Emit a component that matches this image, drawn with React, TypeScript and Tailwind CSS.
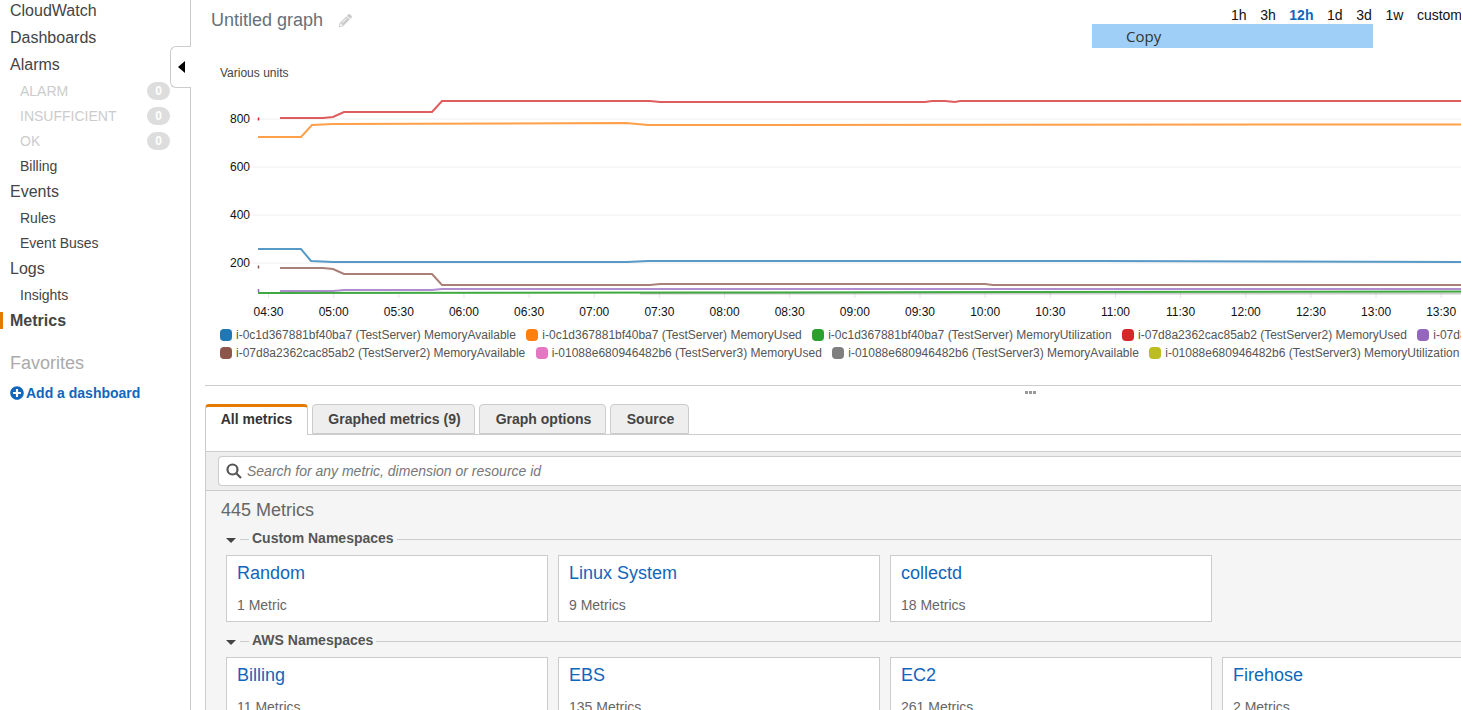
import { FaPencilAlt, FaPlusCircle } from "react-icons/fa";

const ticks = [
  "04:30", "05:00", "05:30", "06:00", "06:30", "07:00", "07:30", "08:00", "08:30", "09:00",
  "09:30", "10:00", "10:30", "11:00", "11:30", "12:00", "12:30", "13:00", "13:30",
];

const yLabels = [
  { label: "800", y: 119 },
  { label: "600", y: 167 },
  { label: "400", y: 215 },
  { label: "200", y: 263 },
];

const series = [
  { color: "#7f7f7f", opacity: 0.4, points: "640,293.5 1461,293.5" },
  { color: "#1f77b4", opacity: 0.75, points: "258,249 301,249 311,261 333,262 627,262 648,261 1100,261 1461,262" },
  { color: "#ff7f0e", opacity: 0.75, points: "258,137 301,137 312,125 333,124 626,123 648,125 1461,124.5" },
  { color: "#d62728", opacity: 0.75, points: "280,118 323,118 333,117 344,112 432,112 442,101 650,101 660,102 925,102 932,101 945,101 955,102 960,101 1461,101" },
  { color: "#8c564b", opacity: 0.75, points: "280,268 323,268 333,269 344,274 432,274 442,285 650,285 660,284 985,284 993,285 1461,285" },
  { color: "#9467bd", opacity: 0.75, points: "280,291 333,291 344,290 432,290 442,289 1461,289" },
  { color: "#2ca02c", opacity: 0.9, points: "258,293 700,292.5 1461,291.5" },
];

const legendRows = [
  [
    { color: "bg-[#1f77b4]", text: "i-0c1d367881bf40ba7 (TestServer) MemoryAvailable" },
    { color: "bg-[#ff7f0e]", text: "i-0c1d367881bf40ba7 (TestServer) MemoryUsed" },
    { color: "bg-[#2ca02c]", text: "i-0c1d367881bf40ba7 (TestServer) MemoryUtilization" },
    { color: "bg-[#d62728]", text: "i-07d8a2362cac85ab2 (TestServer2) MemoryUsed" },
    { color: "bg-[#9467bd]", text: "i-07d8a2362cac85ab2 (TestServer2) MemoryUtilization" },
  ],
  [
    { color: "bg-[#8c564b]", text: "i-07d8a2362cac85ab2 (TestServer2) MemoryAvailable" },
    { color: "bg-[#e377c2]", text: "i-01088e680946482b6 (TestServer3) MemoryUsed" },
    { color: "bg-[#7f7f7f]", text: "i-01088e680946482b6 (TestServer3) MemoryAvailable" },
    { color: "bg-[#bcbd22]", text: "i-01088e680946482b6 (TestServer3) MemoryUtilization" },
  ],
];

const customNamespaces = [
  { name: "Random", count: "1 Metric" },
  { name: "Linux System", count: "9 Metrics" },
  { name: "collectd", count: "18 Metrics" },
];

const awsNamespaces = [
  { name: "Billing", count: "11 Metrics" },
  { name: "EBS", count: "135 Metrics" },
  { name: "EC2", count: "261 Metrics" },
  { name: "Firehose", count: "2 Metrics" },
];

function NavTop({ children, active }: { children: string; active?: boolean }) {
  return (
    <div className={`h-[27px] flex items-center pl-2.5 text-base relative ${active ? "font-bold text-[#444]" : "text-[#444]"}`}>
      {active && <span className="absolute left-0 top-[5px] w-[3px] h-[17px] bg-[#e47b00]"></span>}
      {children}
    </div>
  );
}

function NavSub({ children }: { children: string }) {
  return <div className="h-[25px] flex items-center pl-5 text-sm text-[#444]">{children}</div>;
}

function NavAlarm({ children }: { children: string }) {
  return (
    <div className="h-[25px] flex items-center justify-between pl-5 pr-5 text-sm text-[#ccc]">
      <span>{children}</span>
      <span className="w-[23px] h-[18px] rounded-full bg-[#ddd] text-white text-xs font-bold flex items-center justify-center">
        0
      </span>
    </div>
  );
}

function Chart() {
  return (
    <svg width="1270" height="265" viewBox="191 55 1270 265" className="block" style={{ fontFamily: "'Liberation Sans', Arial, sans-serif" }}>
      <text x="220" y="77" fontSize="12" fill="#444">Various units</text>
      {yLabels.map((l) => (
        <g key={l.label}>
          <line x1="253" x2="1461" y1={l.y} y2={l.y} stroke="#eee" />
          <text x="250" y={l.y + 4} fontSize="12" textAnchor="end" fill="#111">{l.label}</text>
        </g>
      ))}
      {ticks.map((t, i) => (
        <g key={t}>
          <line x1={268.5 + i * 65.15} x2={268.5 + i * 65.15} y1="293" y2="298" stroke="#e5e5e5" />
          <text x={268.5 + i * 65.15} y="316" fontSize="12" textAnchor="middle" fill="#111">{t}</text>
        </g>
      ))}
      <line x1="258.5" x2="258.5" y1="117.5" y2="120.5" stroke="#d62728" strokeWidth="1.5" />
      <line x1="258.5" x2="258.5" y1="265.5" y2="268.5" stroke="#8c564b" strokeWidth="1.5" />
      <line x1="258.5" x2="258.5" y1="289" y2="292" stroke="#9467bd" strokeWidth="1.5" />
      {series.map((s) => (
        <polyline key={s.color} points={s.points} fill="none" stroke={s.color} strokeWidth="2" strokeOpacity={s.opacity} />
      ))}
    </svg>
  );
}

function SectionHeading({ children }: { children: string }) {
  return (
    <div className="flex items-center h-[18px] pl-[5px]">
      <span className="w-0 h-0 border-x-[5px] border-x-transparent border-t-[5px] border-t-[#444] mt-1"></span>
      <span className="w-[9px] h-px bg-[#ccc] ml-1 mt-0.5"></span>
      <span className="ml-[3px] text-sm font-bold text-[#555] whitespace-nowrap">{children}</span>
      <span className="flex-1 h-px bg-[#ccc] ml-[3px] mt-0.5"></span>
    </div>
  );
}

function NamespaceCard({ name, count }: { name: string; count: string }) {
  return (
    <div className="w-[322px] h-[67px] shrink-0 border border-[#ccc] bg-white px-2.5 pt-[5px]">
      <div className="text-lg leading-[24px] text-[#1166bb]">{name}</div>
      <div className="text-sm leading-4 text-[#666] mt-[12px]">{count}</div>
    </div>
  );
}

export default function App() {
  return (
    <div className="relative flex h-screen w-screen overflow-hidden bg-white font-['Liberation_Sans',Arial,sans-serif]">
      {/* Sidebar */}
      <aside className="w-[191px] shrink-0 border-r border-[#ccc] -mt-[3px]">
        <NavTop>CloudWatch</NavTop>
        <NavTop>Dashboards</NavTop>
        <NavTop>Alarms</NavTop>
        <NavAlarm>ALARM</NavAlarm>
        <NavAlarm>INSUFFICIENT</NavAlarm>
        <NavAlarm>OK</NavAlarm>
        <NavSub>Billing</NavSub>
        <NavTop>Events</NavTop>
        <NavSub>Rules</NavSub>
        <NavSub>Event Buses</NavSub>
        <NavTop>Logs</NavTop>
        <NavSub>Insights</NavSub>
        <NavTop active>Metrics</NavTop>
        <div className="pl-2.5 mt-[17px] text-lg leading-[24px] text-[#aaa]">Favorites</div>
        <div className="pl-2.5 mt-[8px] flex items-center gap-[2px] text-sm font-bold text-[#1166bb]">
          <FaPlusCircle className="text-[14px]" />
          Add a dashboard
        </div>
      </aside>

      {/* Collapse handle */}
      <div className="absolute left-[170px] top-[46px] w-[21px] h-[42px] bg-white border border-r-0 border-[#ccc] rounded-l-md flex items-center justify-center">
        <span className="w-0 h-0 border-y-[6px] border-y-transparent border-r-[7px] border-r-black"></span>
      </div>

      {/* Main */}
      <main className="flex-1 min-w-0 flex flex-col">
        <header className="h-[55px] shrink-0 flex justify-between">
          <div className="flex items-center h-10 pl-5">
            <h1 className="text-lg text-[#687078]">Untitled graph</h1>
            <FaPencilAlt className="ml-4 text-[13px] text-[#ccc]" />
          </div>
          <div className="flex flex-col items-end">
            <div className="flex h-6 pt-[6px] -mr-px items-center text-sm text-[#111] gap-[13.6px] whitespace-nowrap">
              <span>1h</span>
              <span>3h</span>
              <span className="font-bold text-[#1166bb]">12h</span>
              <span>1d</span>
              <span>3d</span>
              <span>1w</span>
              <span>custom</span>
            </div>
            <div className="mr-[88px] w-[281px] h-6 bg-[#9fcff7] pl-[34px] flex items-center text-[15px] text-[#333] font-['Open_Sans',sans-serif]">
              Copy
            </div>
          </div>
        </header>

        <Chart />

        <div className="h-[65px] shrink-0 pl-[29px] pt-[6px] overflow-hidden">
          {legendRows.map((row, i) => (
            <div key={i} className="flex h-[18px] items-center gap-[10.4px] whitespace-nowrap">
              {row.map((item) => (
                <div key={item.text} className="flex items-center gap-1 text-xs text-[#555]">
                  <span className={`w-3 h-3 rounded ${item.color}`}></span>
                  {item.text}
                </div>
              ))}
            </div>
          ))}
        </div>

        {/* Lower panel */}
        <div className="ml-[14px] flex-1 min-h-0 flex flex-col relative border-t border-[#ccc]">
          <div className="absolute left-[820px] top-[5px] flex gap-px">
            <span className="w-[3px] h-[3px] bg-[#999]"></span>
            <span className="w-[3px] h-[3px] bg-[#999]"></span>
            <span className="w-[3px] h-[3px] bg-[#999]"></span>
          </div>

          <div className="mt-[18px] h-[31px] shrink-0 flex gap-1 border-b border-[#ccc] text-sm font-bold text-[#444]">
            <div className="w-[103px] h-[31px] bg-white border-x border-[#ccc] border-t-[3px] border-t-[#e47b00] rounded-t flex items-center justify-center pb-1 text-[#333]">
              All metrics
            </div>
            <div className="w-[163px] h-[30px] pl-0.5 bg-[#eee] border border-[#ccc] rounded-t flex items-center justify-center">
              Graphed metrics (9)
            </div>
            <div className="w-[127px] h-[30px] pl-0.5 bg-[#eee] border border-[#ccc] rounded-t flex items-center justify-center">
              Graph options
            </div>
            <div className="w-[79px] h-[30px] pl-0.5 bg-[#eee] border border-[#ccc] rounded-t flex items-center justify-center">
              Source
            </div>
          </div>

          <div className="flex-1 min-h-0 border-l border-[#ccc] flex flex-col">
            <div className="h-[16px] shrink-0 bg-white"></div>
            <div className="h-[40px] shrink-0 border-y border-[#ccc] bg-[#eee] pl-3 py-1 ">
              <div className="h-[30px] -mb-px bg-white border border-r-0 border-[#ccc] rounded-l flex items-center pl-[7px] gap-[5px]">
                <svg width="16" height="16" viewBox="0 0 16 16" fill="none" stroke="#555" strokeWidth="2.2">
                  <circle cx="6.5" cy="6.5" r="5" />
                  <line x1="10.5" y1="10.5" x2="15" y2="15" />
                </svg>
                <span className="text-sm italic text-[#777]">Search for any metric, dimension or resource id</span>
              </div>
            </div>
            <div className="flex-1 min-h-0 bg-[#f5f5f5] overflow-hidden pl-[15px]">
              <div className="text-lg leading-[24px] text-[#666] mt-[7px]">445 Metrics</div>
              <div className="mt-[7px]">
                <SectionHeading>Custom Namespaces</SectionHeading>
              </div>
              <div className="flex gap-2.5 pl-[5px] mt-[8px]">
                {customNamespaces.map((n) => (
                  <NamespaceCard key={n.name} {...n} />
                ))}
              </div>
              <div className="mt-[9px]">
                <SectionHeading>AWS Namespaces</SectionHeading>
              </div>
              <div className="flex gap-2.5 pl-[5px] mt-[8px]">
                {awsNamespaces.map((n) => (
                  <NamespaceCard key={n.name} {...n} />
                ))}
              </div>
            </div>
          </div>
        </div>
      </main>
    </div>
  );
}
